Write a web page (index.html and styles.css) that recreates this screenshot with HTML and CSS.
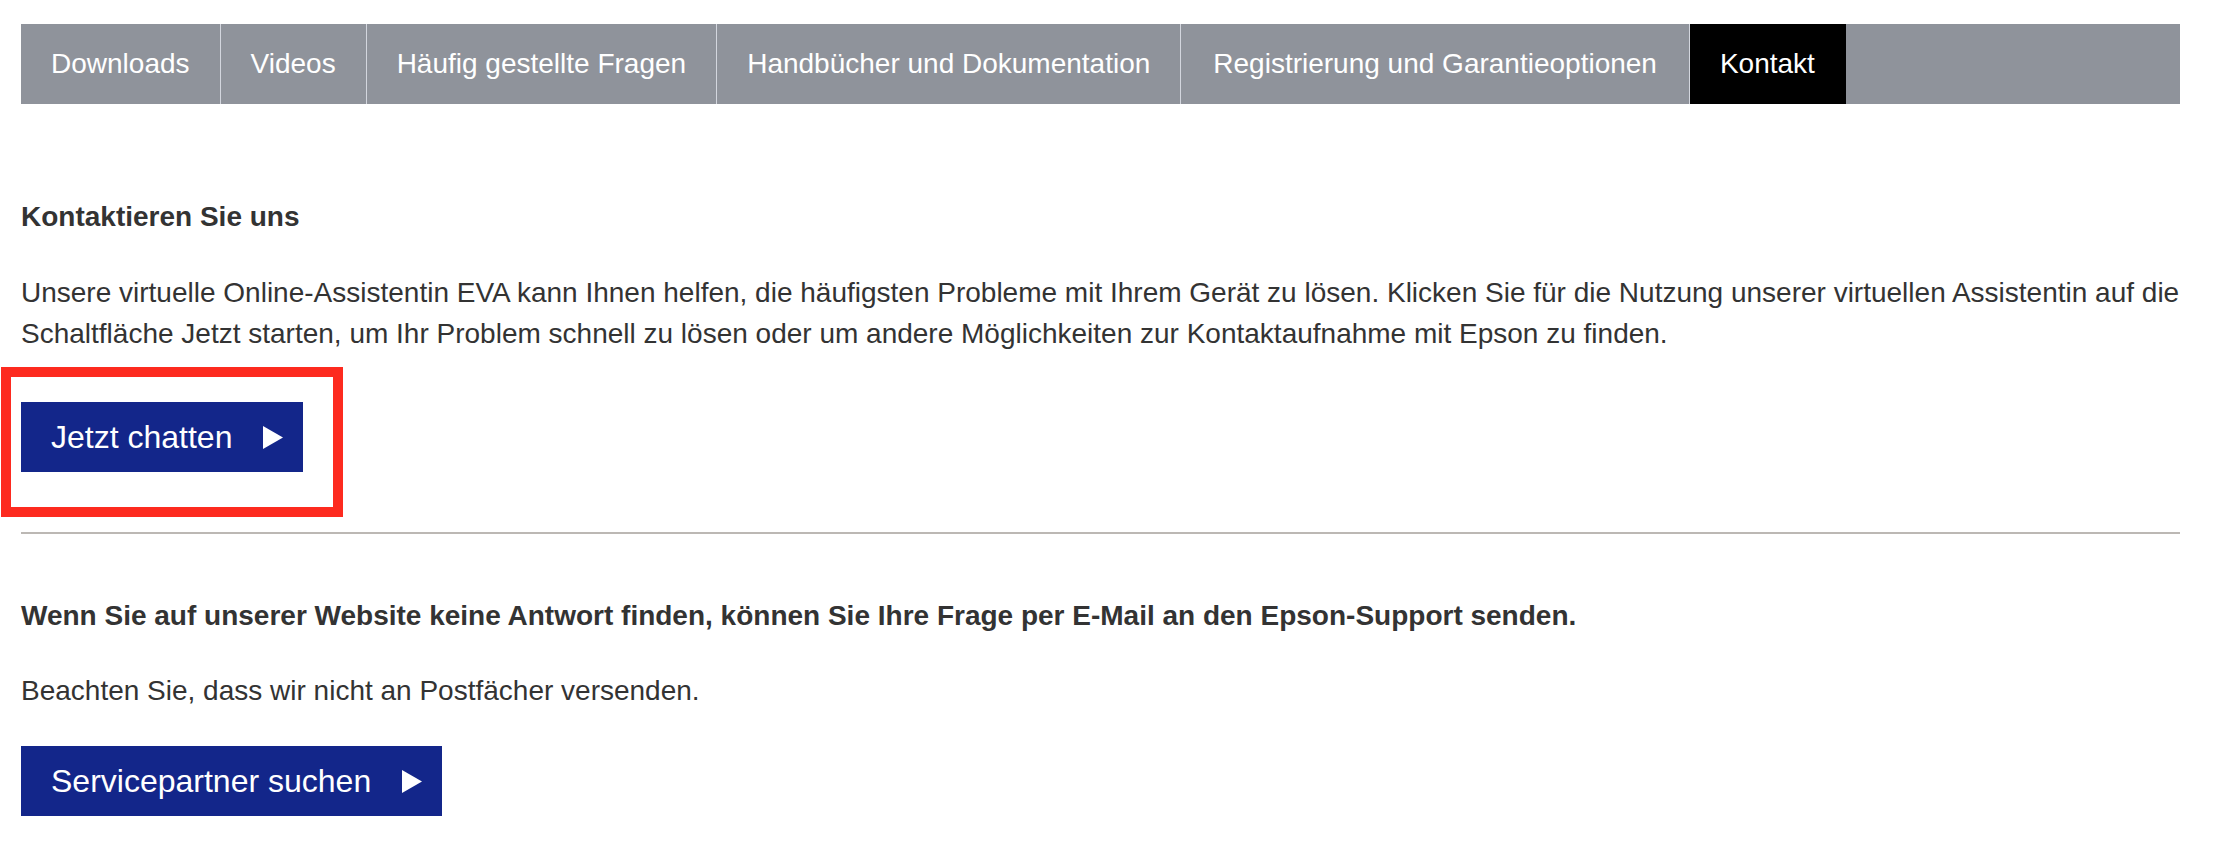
FILE: index.html
```html
<!DOCTYPE html>
<html lang="de">
<head>
<meta charset="utf-8">
<title>Kontakt</title>
<link rel="stylesheet" href="styles.css">
</head>
<body>
<div class="page">
  <nav class="tabs">
    <a class="tab">Downloads</a>
    <a class="tab">Videos</a>
    <a class="tab">Häufig gestellte Fragen</a>
    <a class="tab">Handbücher und Dokumentation</a>
    <a class="tab tab-wide">Registrierung und Garantieoptionen</a>
    <a class="tab active">Kontakt</a>
  </nav>

  <section class="section first">
    <h2 class="heading">Kontaktieren Sie uns</h2>
    <p class="text para-main">Unsere virtuelle Online-Assistentin EVA kann Ihnen helfen, die häufigsten Probleme mit Ihrem Gerät zu lösen. Klicken Sie für die Nutzung unserer virtuellen Assistentin auf die Schaltfläche Jetzt starten, um Ihr Problem schnell zu lösen oder um andere Möglichkeiten zur Kontaktaufnahme mit Epson zu finden.</p>
    <div class="btn-wrap">
      <a class="btn"><span>Jetzt chatten</span><svg class="arrow" viewBox="0 0 20 23" width="20" height="23"><polygon points="0,0 20,11.5 0,23" fill="#fff"/></svg></a>
      <span class="highlight"></span>
    </div>
  </section>

  <hr class="divider">

  <section class="section second">
    <h2 class="heading">Wenn Sie auf unserer Website keine Antwort finden, können Sie Ihre Frage per E-Mail an den Epson-Support senden.</h2>
    <p class="text para-note">Beachten Sie, dass wir nicht an Postfächer versenden.</p>
    <a class="btn"><span>Servicepartner suchen</span><svg class="arrow" viewBox="0 0 20 23" width="20" height="23"><polygon points="0,0 20,11.5 0,23" fill="#fff"/></svg></a>
  </section>
</div>
</body>
</html>
```

FILE: styles.css
```css
html, body {
  margin: 0;
  padding: 0;
  background: #ffffff;
}

body {
  font-family: "Liberation Sans", Arial, Helvetica, sans-serif;
  color: #333333;
}

.page {
  padding: 24px 42px 40px 21px;
}

.tabs {
  display: flex;
  height: 80px;
  background: #8f939b;
}

.tab {
  display: flex;
  align-items: center;
  padding: 0 30px;
  font-size: 28px;
  color: #ffffff;
  white-space: nowrap;
  border-left: 1px solid #d3d6de;
}

.tab:first-child {
  border-left: none;
}

.tab-wide {
  padding: 0 32px;
}

.tab.active {
  background: #000000;
  padding: 0 31px 0 30px;
}

.section {
  display: flex;
  flex-direction: column;
  align-items: flex-start;
}

.heading {
  margin: 0;
  font-size: 28px;
  font-weight: bold;
  line-height: 41px;
}

.text {
  margin: 0;
  font-size: 28px;
  line-height: 41px;
}

.first {
  padding-top: 92px;
}

.first .para-main {
  margin-top: 35px;
}

.btn-wrap {
  position: relative;
  margin-top: 48px;
}

.btn {
  display: flex;
  align-items: center;
  gap: 31px;
  height: 70px;
  padding: 0 20px 0 30px;
  background: #13268a;
  color: #ffffff;
  font-size: 32px;
  text-decoration: none;
  box-sizing: border-box;
}

.arrow {
  display: block;
  flex: none;
}

.highlight {
  position: absolute;
  left: -20px;
  top: -35px;
  width: 342px;
  height: 150px;
  border: 10px solid #fd2a1f;
  box-sizing: border-box;
}

.divider {
  margin: 60px 0 0 0;
  height: 2px;
  border: none;
  background: #bcb8b4;
}

.second {
  padding-top: 61px;
}

.second .para-note {
  margin-top: 34px;
}

.second .btn {
  margin-top: 35px;
}
```
